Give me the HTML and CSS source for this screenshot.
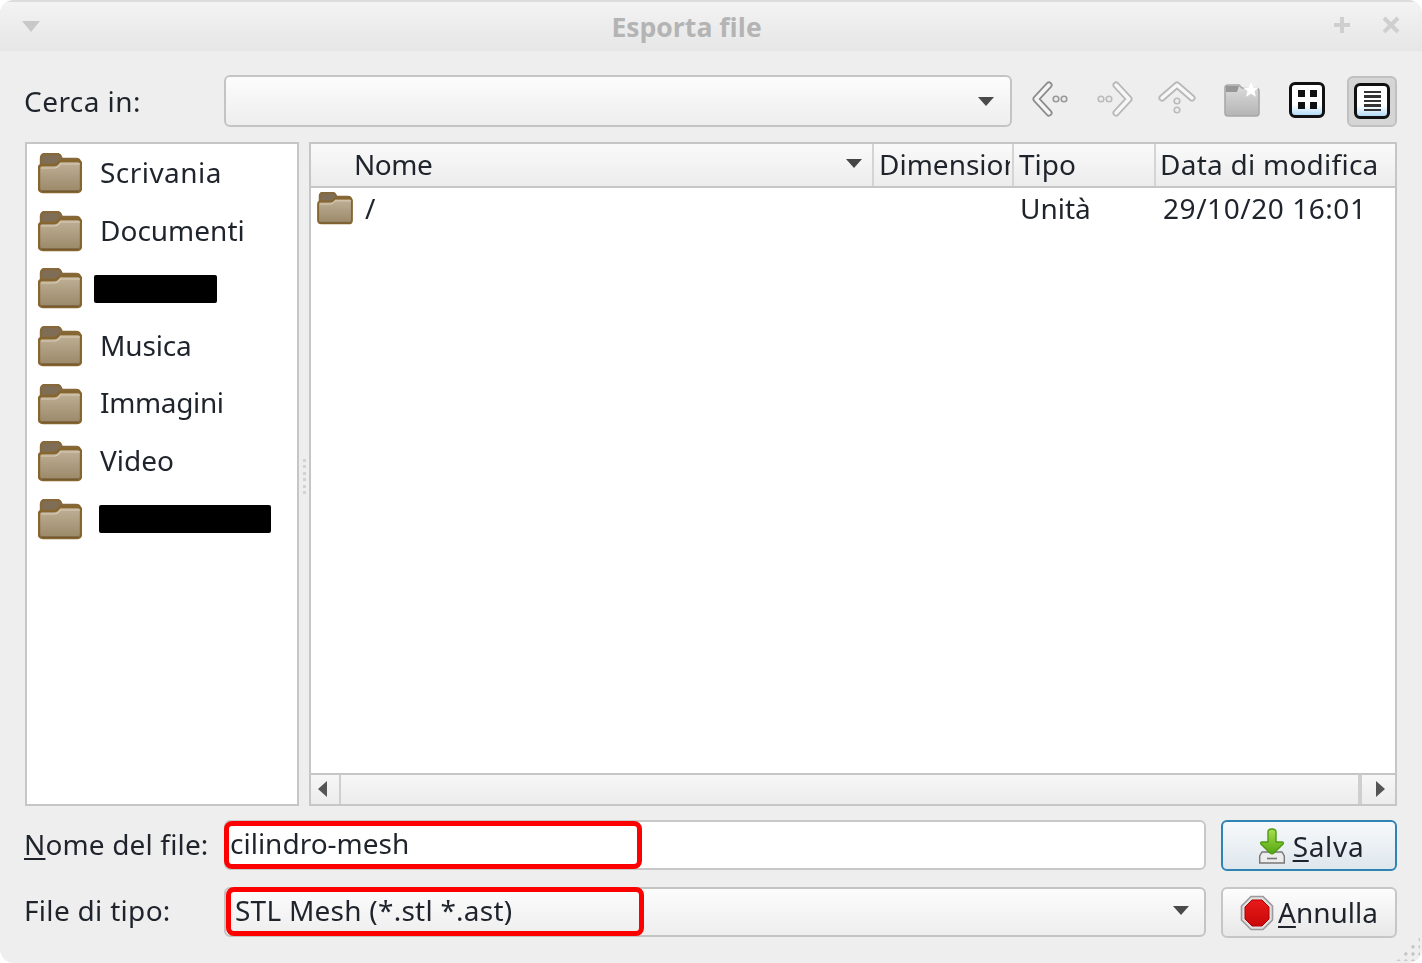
FILE: index.html
```html
<!DOCTYPE html>
<html lang="it">
<head>
<meta charset="utf-8">
<title>Esporta file</title>
<link rel="stylesheet" href="styles.css">
</head>
<body>
<svg class="defs" width="0" height="0" aria-hidden="true">
  <defs>
    <linearGradient id="fb" x1="0" y1="0" x2="0" y2="1"><stop offset="0" stop-color="#c0b197"/><stop offset="1" stop-color="#9a8868"/></linearGradient>
    <symbol id="folder" viewBox="0 0 44 41">
      <path d="M3 11V5q0-4 4-4h12q3 0 4 3l1 2h14q4 0 4 4v8H3z" fill="#7f6e55" stroke="#86683a" stroke-width="2.400"/>
      <path d="M1 15q0-3 3-3h12q3 0 5-3l1-1h18q3 0 3 3v24q0 4-4 4H5q-4 0-4-4z" fill="url(#fb)" stroke="#86652f" stroke-width="2.400"/>
      <path d="M3 15h13q4 0 6-4h20" fill="none" stroke="#d9cdb8" stroke-width="1.200"/>
      <path d="M4 38h36" stroke="#5a452a" stroke-opacity=".35" stroke-width="2"/>
    </symbol>
  </defs>
</svg>
<div class="window">
  <header class="titlebar">
    <span class="tb-menu"></span>
    <span class="tb-title">Esporta file</span>
    <svg class="tb-btn" width="20" height="20" viewBox="0 0 20 20"><path d="M10 2v16M2 10h16" stroke="#cfcfcf" stroke-width="4"/></svg>
    <svg class="tb-btn" width="20" height="20" viewBox="0 0 20 20"><path d="M3 3l14 14M17 3L3 17" stroke="#cfcfcf" stroke-width="4"/></svg>
  </header>
  <main class="content">
    <div class="row-top">
      <label class="lbl ls-cerca">Cerca in:</label>
      <div class="combo top-combo"><span class="arrow"></span></div>
      <div class="tools">
        <span class="tool"><svg width="38" height="38" viewBox="0 0 38 38" fill="none"><path d="M17 4L4 18l13 14" stroke="#8c8c8c" stroke-width="7" stroke-linecap="round" stroke-linejoin="round"/><path d="M17 4L4 18l13 14" stroke="#f5f5f5" stroke-width="3.500" stroke-linecap="round" stroke-linejoin="round"/><circle cx="24" cy="18" r="2.800" stroke="#999" stroke-width="1.600"/><circle cx="32" cy="18" r="2.800" stroke="#999" stroke-width="1.600"/></svg></span>
        <span class="tool"><svg width="38" height="38" viewBox="0 0 38 38" fill="none"><path d="M21 4l13 14-13 14" stroke="#b8b8b8" stroke-width="7" stroke-linecap="round" stroke-linejoin="round"/><path d="M21 4l13 14-13 14" stroke="#f7f7f7" stroke-width="3.500" stroke-linecap="round" stroke-linejoin="round"/><circle cx="14" cy="18" r="2.800" stroke="#bbb" stroke-width="1.600"/><circle cx="6" cy="18" r="2.800" stroke="#bbb" stroke-width="1.600"/></svg></span>
        <span class="tool"><svg width="38" height="38" viewBox="0 0 38 38" fill="none"><path d="M4 17L19 4l15 13" stroke="#b8b8b8" stroke-width="7" stroke-linecap="round" stroke-linejoin="round"/><path d="M4 17L19 4l15 13" stroke="#f7f7f7" stroke-width="3.500" stroke-linecap="round" stroke-linejoin="round"/><circle cx="19" cy="20" r="2.800" stroke="#bbb" stroke-width="1.600"/><circle cx="19" cy="29" r="2.800" stroke="#bbb" stroke-width="1.600"/></svg></span>
        <span class="tool tool-new"><svg width="38" height="38" viewBox="0 0 38 38"><defs><linearGradient id="nf" x1="0" y1="0" x2="0" y2="1"><stop offset="0" stop-color="#dcdcdc"/><stop offset="1" stop-color="#b4b4b4"/></linearGradient></defs><path d="M2 7q0-3 3-3h11l3 3h14q3 0 3 3v22q0 3-3 3H5q-3 0-3-3z" fill="url(#nf)" stroke="#a8a8a8" stroke-width="1.600"/><path d="M3 11V5h13l-2 6z" fill="#979797"/><path d="M28 1l2.200 5.200 5.600.4-4.300 3.600 1.400 5.500-4.900-3-4.900 3 1.400-5.500-4.300-3.600 5.600-.4z" fill="#fff"/></svg></span>
        <span class="tool tool-grid"><span class="view"><span class="grid-ico"><i></i><i></i><i></i><i></i></span></span></span>
        <span class="tool tool-on"><span class="view"><span class="list-ico"><i></i><i></i><i></i><i></i><i></i></span></span></span>
      </div>
    </div>
    <div class="row-mid">
      <nav class="places">
        <div class="place"><svg class="fld"><use href="#folder"/></svg><span class="ls-scr">Scrivania</span></div>
        <div class="place"><svg class="fld"><use href="#folder"/></svg><span>Documenti</span></div>
        <div class="place"><svg class="fld"><use href="#folder"/></svg><b class="redact w-a"></b></div>
        <div class="place"><svg class="fld"><use href="#folder"/></svg><span class="ls-mus">Musica</span></div>
        <div class="place"><svg class="fld"><use href="#folder"/></svg><span class="ls-imm">Immagini</span></div>
        <div class="place"><svg class="fld"><use href="#folder"/></svg><span>Video</span></div>
        <div class="place"><svg class="fld"><use href="#folder"/></svg><b class="redact w-b"></b></div>
      </nav>
      <div class="splitter"><i></i><i></i><i></i><i></i><i></i><i></i></div>
      <section class="tree">
        <div class="thead">
          <div class="th th-name"><span class="ls-nome">Nome</span><span class="sort"></span></div>
          <div class="th th-size"><span class="clip">Dimensione</span></div>
          <div class="th th-type">Tipo</div>
          <div class="th th-date"><span class="ls-data">Data di modifica</span></div>
        </div>
        <div class="tbody">
          <div class="tr">
            <div class="td td-name"><svg class="fld-sm"><use href="#folder"/></svg><span>/</span></div>
            <div class="td td-size"></div>
            <div class="td td-type">Unità</div>
            <div class="td td-date">29/10/20 16:01</div>
          </div>
        </div>
        <div class="hscroll">
          <span class="sb-btn"><span class="tri-l"></span></span>
          <span class="sb-track"></span>
          <span class="sb-btn sb-right"><span class="tri-r"></span></span>
        </div>
      </section>
    </div>
    <div class="row-form">
      <label class="lbl lbl-nome"><u>N</u>ome del file:</label>
      <div class="input">cilindro-mesh</div>
      <button class="btn btn-default"><svg width="26" height="36" viewBox="0 0 26 36"><defs><linearGradient id="ga" x1="0" y1="0" x2="0" y2="1"><stop offset="0" stop-color="#a8e050"/><stop offset="1" stop-color="#55a512"/></linearGradient></defs><path d="M3 24h20l2.300 4v7H.700v-7z" fill="#ececec" stroke="#777" stroke-width="1.400"/><path d="M8 30.500h10" stroke="#777" stroke-width="1.600"/><path d="M9 4q0-3 4-3t4 3v10h6q2 0 1 2l-9 9q-2 1.500-4 0l-9-9q-1-2 1-2h6z" fill="url(#ga)" stroke="#4f9a14" stroke-width="1.400"/></svg><span class="ls-salva"><u>S</u>alva</span></button>
    </div>
    <div class="row-form row-form2">
      <label class="lbl lbl-file">File di tipo:</label>
      <div class="combo type-combo"><span class="type-text">STL Mesh (*.stl *.ast)</span><span class="arrow"></span></div>
      <button class="btn btn-cancel"><svg width="34" height="36" viewBox="0 0 34 36"><defs><linearGradient id="gr" x1="0" y1="0" x2="0" y2="1"><stop offset="0" stop-color="#e81a1a"/><stop offset="1" stop-color="#c90808"/></linearGradient></defs><path d="M11 1.500h12L32.500 11v14L23 34.500H11L1.500 25V11z" fill="#e0e0e0" stroke="#9a9a9a" stroke-width="1.600"/><path d="M12 5h10l7 7v12l-7 7H12l-7-7V12z" fill="url(#gr)" stroke="#b00000"/></svg><span class="txt-ann"><u>A</u>nnulla</span></button>
    </div>
    <span class="mark mark-a"></span>
    <span class="mark mark-b"></span>
    <span class="grip"></span>
  </main>
</div>
</body>
</html>
```
FILE: styles.css
```css
* { box-sizing: border-box; }
html, body { margin: 0; padding: 0; }
body { width: 1422px; height: 963px; background: #fff; overflow: hidden; font-family: "Noto Sans", sans-serif; font-size: 28px; color: #1f242c; }
.defs { position: absolute; }
.window { width: 1422px; height: 963px; background: #eeeeee; border-radius: 14px; display: flex; flex-direction: column; overflow: hidden; filter: blur(0.45px); }

.titlebar { height: 51px; flex: none; background: linear-gradient(#f3f3f3, #e6e6e6); border-top: 2px solid #dcdcdc; display: flex; align-items: center; padding: 0 21px 0 22px; gap: 18px; }
.tb-menu { width: 0; height: 0; border-left: 9px solid transparent; border-right: 9px solid transparent; border-top: 11px solid #c8c8c8; }
.tb-title { flex: 1; text-align: center; font-family: "Open Sans", "Noto Sans", sans-serif; font-weight: 700; font-size: 26.600px; color: #b4b4b4; padding-left: 1px; }
.tb-btn { margin-bottom: 3px; }
.tb-btn + .tb-btn { margin-left: 11px; }

.content { position: relative; flex: 1; padding: 24px 25px 0; display: flex; flex-direction: column; }
.lbl { width: 199px; flex: none; white-space: nowrap; line-height: 1; }
.lbl u { text-underline-offset: 3px; text-decoration-thickness: 2px; }
.ls-cerca { letter-spacing: .45px; margin-left: -1px; margin-right: 1px; }
.lbl-nome { letter-spacing: .15px; margin-left: -1px; margin-right: 1px; padding-bottom: 4px; }
.lbl-file { letter-spacing: .3px; margin-left: -1px; margin-right: 1px; padding-bottom: 6px; }
.ls-scr { letter-spacing: .45px; }
.ls-imm { letter-spacing: -.35px; }
.ls-mus { letter-spacing: -.15px; }
.ls-nome { letter-spacing: -.5px; }
.ls-data { letter-spacing: .25px; }
.ls-salva { letter-spacing: .7px; }

.row-top { display: flex; align-items: center; height: 52px; }
.combo { height: 100%; border: 2px solid #c4c4c4; border-radius: 6px; background: linear-gradient(#fcfcfc, #eeeeee); position: relative; display: flex; align-items: center; }
.top-combo { width: 788px; flex: none; }
.arrow { position: absolute; right: 16px; top: 50%; margin-top: -4px; width: 0; height: 0; border-left: 8.500px solid transparent; border-right: 8.500px solid transparent; border-top: 9px solid #4a4a4a; }
.tools { flex: 1; display: flex; align-items: center; margin-left: 20px; gap: 25px; justify-content: flex-start; margin-bottom: 3px; }
.tool { width: 38px; height: 38px; display: flex; align-items: center; justify-content: center; flex: none; }
.tool-new { margin-left: 2px; }
.tool-grid { margin-left: 2px; }
.tool-on { width: 50px; height: 51px; margin-left: -4px; margin-top: 3px; background: #d5d5d5; border: 2px solid #c0c0c0; border-radius: 6px; }
.view { width: 36px; height: 36px; border: 3px solid #111; border-radius: 6px; background: linear-gradient(#fff 65%, #b3dcf7); display: flex; align-items: center; justify-content: center; flex: none; }
.grid-ico { display: grid; grid-template-columns: 7px 7px; gap: 5px; }
.grid-ico i { width: 7px; height: 7px; background: #111; display: block; }
.list-ico { display: flex; flex-direction: column; gap: 2px; }
.list-ico i { display: block; width: 17px; height: 2.500px; background: #333; }

.row-mid { display: flex; height: 664px; margin-top: 15px; flex: none; }
.places { width: 274px; flex: none; background: #fff; border: 2px solid #c6c6c6; padding-top: 1px; }
.place { height: 57.600px; display: flex; align-items: center; padding-left: 11px; }
.place span { margin-left: 18px; line-height: 1; padding-bottom: 3.500px; }
.fld { width: 44px; height: 41px; flex: none; }
.redact { display: block; height: 28px; background: #000; border-radius: 2px; }
.w-a { width: 123px; margin-left: 12px; }
.w-b { width: 172px; margin-left: 17px; }
.splitter { width: 10px; flex: none; display: flex; flex-direction: column; align-items: center; justify-content: center; gap: 3.500px; padding-top: 5px; }
.splitter i { display: block; width: 3px; height: 3px; background: #d2d2d2; }
.tree { flex: 1; border: 2px solid #c6c6c6; background: #fff; display: flex; flex-direction: column; }
.thead { height: 44px; flex: none; display: flex; background: linear-gradient(#fafafa, #ececec); border-bottom: 2px solid #c6c6c6; }
.th { height: 100%; display: flex; align-items: center; border-right: 2px solid #d4d4d4; padding-left: 5px; padding-bottom: 2px; position: relative; white-space: nowrap; }
.th-name { width: 563px; padding-left: 43px; }
.th-size { width: 140px; }
.clip { overflow: hidden; display: block; width: 131px; }
.th-type { width: 142px; }
.th-date { flex: 1; border-right: 0; padding-left: 4px; }
.sort { position: absolute; right: 10px; top: 15px; width: 0; height: 0; border-left: 8.500px solid transparent; border-right: 8.500px solid transparent; border-top: 9px solid #444; }
.tbody { flex: 1; }
.tr { display: flex; height: 39px; align-items: center; }
.td { white-space: nowrap; }
.td-name { width: 564px; display: flex; align-items: center; padding-left: 6px; }
.td-name span { margin-left: 12px; }
.fld-sm { width: 36px; height: 33px; flex: none; margin-top: 2px; }
.td-size { width: 140px; }
.td-type { width: 142px; padding-left: 5px; }
.td-date { flex: 1; padding-left: 6px; letter-spacing: .55px; }
.hscroll { height: 31px; flex: none; display: flex; border-top: 2px solid #c6c6c6; background: linear-gradient(#f7f7f7, #ececec); }
.sb-btn { width: 30px; flex: none; border-right: 2px solid #cfcfcf; display: flex; align-items: center; justify-content: center; padding-right: 6px; padding-bottom: 2px; }
.sb-right { width: 35px; border-right: 0; border-left: 2px solid #cfcfcf; padding-right: 0; padding-left: 4px; }
.sb-track { flex: 1; border-right: 2px solid #cfcfcf; }
.tri-l { width: 0; height: 0; border-top: 8px solid transparent; border-bottom: 8px solid transparent; border-right: 9px solid #555; }
.tri-r { width: 0; height: 0; border-top: 8px solid transparent; border-bottom: 8px solid transparent; border-left: 9px solid #555; }

.row-form { display: flex; align-items: center; height: 51px; margin-top: 14px; flex: none; }
.row-form2 { margin-top: 16px; }
.input { width: 982px; flex: none; height: 50px; background: #fff; border: 2px solid #c8c8c8; border-radius: 6px; display: flex; align-items: center; padding: 0 0 4px 4px; margin-bottom: 1px; }
.type-combo { width: 982px; flex: none; height: 50px; margin-bottom: 1px; }
.type-combo .arrow { right: 15px; margin-top: -6px; }
.type-text { padding: 0 0 5px 9px; letter-spacing: .25px; }
.btn { width: 176px; height: 51px; flex: none; margin-left: 15px; font: inherit; color: inherit; border: 2px solid #c6c6c6; border-radius: 6px; background: linear-gradient(#fdfdfd, #e8e8e8); display: flex; align-items: center; justify-content: center; padding: 0; }
.btn u { text-underline-offset: 3px; text-decoration-thickness: 2px; }
.btn-default { border-color: #2f84b4; background: linear-gradient(#f6f9fb, #dfe7ed); gap: 8px; padding-left: 5px; }
.btn-cancel { gap: 4px; }
.txt-ann { padding-bottom: 2px; }

.mark { position: absolute; border: 5px solid #f00; border-radius: 8px; pointer-events: none; }
.mark-a { left: 224px; top: 770px; width: 418px; height: 48px; }
.mark-b { left: 226px; top: 836px; width: 418px; height: 49px; }
.grip { position: absolute; right: 2px; bottom: 2px; width: 25px; height: 25px; background-image: radial-gradient(circle, #c6c6c6 1.400px, transparent 1.700px); background-size: 7.200px 7.200px; clip-path: polygon(100% 0, 100% 100%, 0 100%); }
```
